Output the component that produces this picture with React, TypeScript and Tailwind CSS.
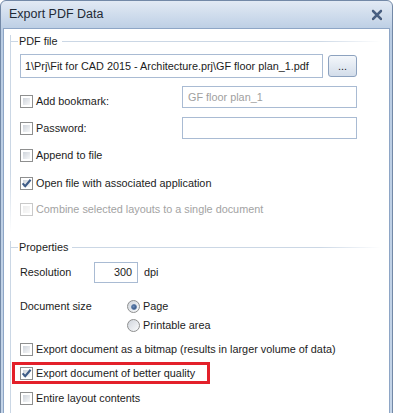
import type { ReactNode } from "react";

/* ── small Win7-ish controls ── */
function Check({ checked, disabled }: { checked?: boolean; disabled?: boolean }) {
  return (
    <span
      className={`relative flex h-[13px] w-[13px] shrink-0 border bg-white p-[2px] ${
        disabled ? "border-[#c9c9c9]" : "border-[#8e8f8f]"
      }`}
    >
      <span
        className={`h-full w-full bg-gradient-to-br ${
          disabled ? "from-[#ececec] to-[#fafafa]" : "from-[#cfd4db] to-[#f7f8f9]"
        }`}
      />
      {checked && (
        <svg viewBox="0 0 13 13" className="absolute left-[-1px] top-[-1px] h-[13px] w-[13px]">
          <path d="M2.6 6.4 L5.2 9.2 L10.6 2.8" fill="none" stroke="#3e5b86" strokeWidth="2.1" />
        </svg>
      )}
    </span>
  );
}

function CheckRow({
  label,
  checked,
  disabled,
}: {
  label: string;
  checked?: boolean;
  disabled?: boolean;
}) {
  return (
    <div className="flex h-[13px] items-center gap-[3px]">
      <Check checked={checked} disabled={disabled} />
      <span className={`whitespace-nowrap ${disabled ? "text-[#a3a3a3]" : ""}`}>{label}</span>
    </div>
  );
}

function Radio({ label, selected }: { label: string; selected?: boolean }) {
  return (
    <div className="flex h-[13px] items-center gap-[3px]">
      <span className="flex h-[13px] w-[13px] shrink-0 items-center justify-center rounded-full border border-[#8e8f8f] bg-gradient-to-br from-[#d0d5dc] to-[#fafbfc]">
        {selected && (
          <span className="h-[6px] w-[6px] rounded-full border border-[#5a7aa6] bg-[radial-gradient(circle_at_40%_40%,#6f8fbd,#203f6c)]" />
        )}
      </span>
      <span className="whitespace-nowrap">{label}</span>
    </div>
  );
}

/* group box: top + left line, both fading out */
function Group({ title, children, fade }: { title: string; children: ReactNode; fade?: boolean }) {
  return (
    <div
      className={`border-l border-[#cbd7e5] ${
        fade ? "[border-image:linear-gradient(to_bottom,#cbd7e5_70%,#ffffff)_1]" : ""
      }`}
    >
      <div className="-mt-[7px] flex h-[13px] items-center">
        <div className="h-px w-[7px] bg-[#cbd7e5]" />
        <span className="whitespace-nowrap pl-[1px] pr-[4px]">{title}</span>
        <div className="h-px flex-1 bg-gradient-to-r from-[#cbd7e5] from-80% to-white" />
      </div>
      {children}
    </div>
  );
}

export default function App() {
  return (
    <div className="h-[413px] w-[393px] overflow-hidden bg-white font-['Liberation_Sans',Arial,sans-serif] text-[10.85px] text-[#1c1c1c]">
      {/* window frame */}
      <div className="h-[440px] rounded-t-[6px] border border-[#7389a7] bg-gradient-to-b from-[#e2eaf4] from-0% via-[#b9cce3] via-[7%] to-[#c5d5e8] px-[2px]">
        {/* title bar */}
        <div className="flex h-[27px] items-center justify-between pl-[6px] pr-[7px]">
          <span className="text-[12.5px] text-[#1f2a36]">Export PDF Data</span>
          <svg viewBox="0 0 12 12" className="h-[12px] w-[12px]">
            <path d="M2 2 L10 10 M10 2 L2 10" stroke="#e9eef5" strokeWidth="3.8" strokeLinecap="round" />
            <path d="M2 2 L10 10 M10 2 L2 10" stroke="#485f82" strokeWidth="2.6" strokeLinecap="round" />
          </svg>
        </div>

        {/* client area */}
        <div className="h-[420px] border border-[#8ea6c6] bg-white pl-[6px] pr-[8px] pt-[13px]">
          <Group title="PDF file" fade>
            <div className="pb-[16px] pl-[9px]">
              {/* path */}
              <div className="mt-[6px] flex items-center">
                <div className="flex h-[24px] w-[303px] items-center overflow-hidden border border-[#a9bbd3] pl-[4px]">
                  <span className="whitespace-nowrap">
                    {"1\\Prj\\Fit for CAD 2015 - Architecture.prj\\GF floor plan_1.pdf"}
                  </span>
                </div>
                <button className="ml-[5px] flex h-[22px] w-[29px] items-end justify-center rounded-[3px] border border-[#8da2bf] bg-gradient-to-b from-[#f4f7fb] to-[#d3ddea] pb-[4px] leading-none">
                  ...
                </button>
              </div>

              {/* add bookmark */}
              <div className="mt-[8px] flex h-[22px]">
                <div className="w-[162px] pt-[9px]">
                  <CheckRow label="Add bookmark:" />
                </div>
                <div className="flex h-[22px] w-[175px] items-center border border-[#a9bbd3] pl-[5px] text-[#a0a0a0]">
                  GF floor plan_1
                </div>
              </div>

              {/* password */}
              <div className="mt-[9px] flex h-[22px] items-center">
                <div className="w-[162px]">
                  <CheckRow label="Password:" />
                </div>
                <div className="h-[22px] w-[175px] border border-[#a9bbd3]" />
              </div>

              <div className="mt-[10px]">
                <CheckRow label="Append to file" />
              </div>
              <div className="mt-[15px]">
                <CheckRow label="Open file with associated application" checked />
              </div>
              <div className="mt-[13px]">
                <CheckRow label="Combine selected layouts to a single document" disabled />
              </div>
            </div>
          </Group>

          <div className="mt-[16px]">
            <Group title="Properties">
              <div className="pb-[20px] pl-[9px]">
                {/* resolution */}
                <div className="mt-[8px] flex h-[21px] items-center">
                  <span className="w-[74px]">Resolution</span>
                  <div className="flex h-[21px] w-[44px] items-center justify-end border border-[#a9bbd3] pr-[5px]">
                    300
                  </div>
                  <span className="ml-[6px]">dpi</span>
                </div>

                {/* document size */}
                <div className="mt-[17px] flex">
                  <div className="flex h-[13px] w-[107px] items-center">Document size</div>
                  <div className="flex flex-col gap-[6px]">
                    <Radio label="Page" selected />
                    <Radio label="Printable area" />
                  </div>
                </div>

                <div className="mt-[11px]">
                  <CheckRow label="Export document as a bitmap (results in larger volume of data)" />
                </div>

                {/* highlighted option */}
                <div className="-ml-[8px] mt-[6px] flex h-[22px] w-[198px] items-center border-[3px] border-[#e3202a] pl-[5px]">
                  <CheckRow label="Export document of better quality" checked />
                </div>

                <div className="mt-[8px]">
                  <CheckRow label="Entire layout contents" />
                </div>
              </div>
            </Group>
          </div>
        </div>
      </div>
    </div>
  );
}
